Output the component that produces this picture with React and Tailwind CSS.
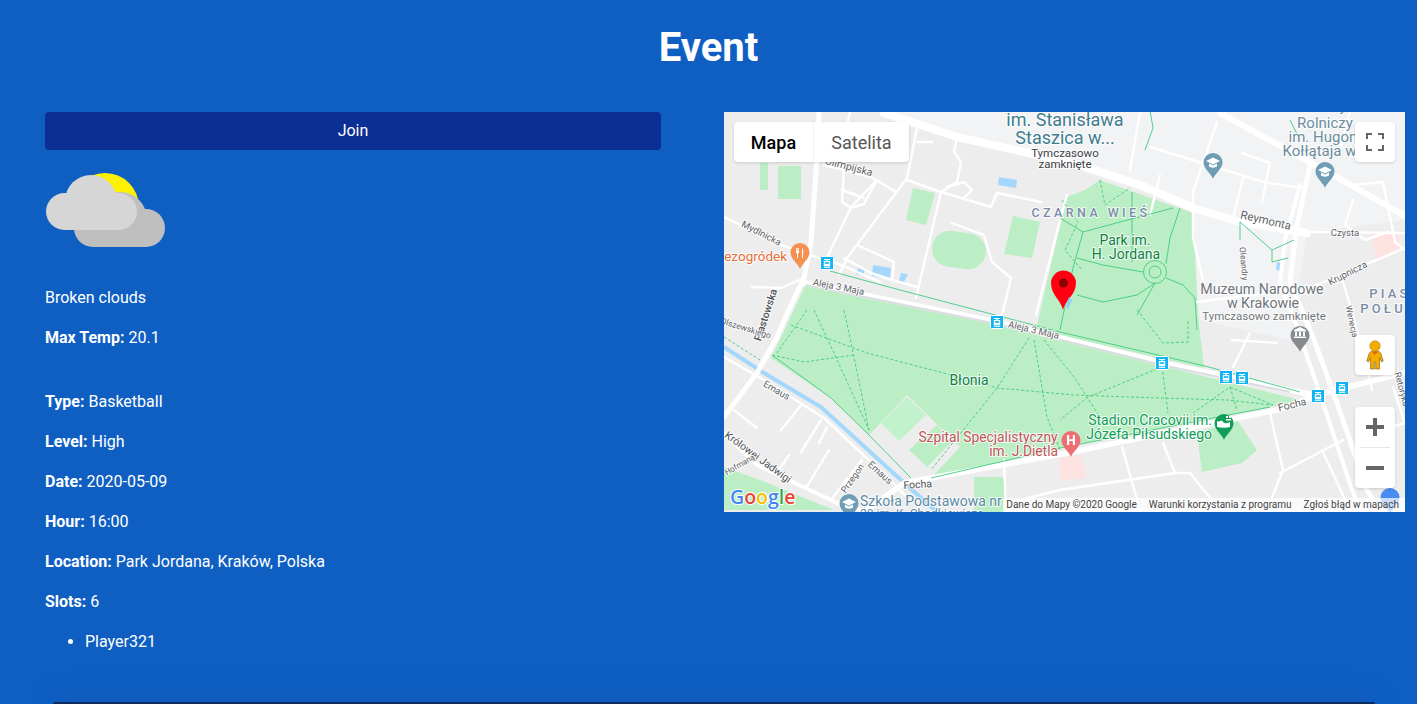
import React from "react";

const MINOR_ROADS = [
  "M917 128 907 178 847 258 839 275",
  "M877 180 851 207 827 258",
  "M824 165 871 177 896 192",
  "M844 168 842 202 851 208 864 204 877 180",
  "M842 190 864 198",
  "M907 180 941 192 991 207 997 193 1041 202",
  "M941 192 916 298",
  "M957 137 954 152 961 162 957 182 941 192",
  "M947 187 964 182 972 190 964 198",
  "M952 223 984 235 992 262 1011 278 1002 315",
  "M857 245 894 262 892 280 917 287",
  "M844 258 871 273 892 280",
  "M1067 195 1058 228 1036 315",
  "M724 217 781 245 811 255 841 265 880 282",
  "M752 287 781 288 804 278",
  "M917 142 932 142",
  "M850 112 846 130 838 142",
  "M1217 122 1193 192 1193 238 1203 280",
  "M1150 147 1267 183 1305 188",
  "M1242 153 1270 163 1262 202",
  "M1243 178 1233 218",
  "M1140 112 1130 170",
  "M1160 175 1150 215",
  "M1353 185 1383 182 1395 242 1405 250",
  "M1312 232 1405 233",
  "M1300 292 1405 248",
  "M1197 302 1293 290",
  "M1343 282 1353 315 1372 390",
  "M1232 340 1277 343",
  "M1250 333 1233 367",
  "M1270 413 1283 470 1267 510",
  "M1122 447 1140 510",
  "M1163 443 1175 473 1060 490",
  "M1175 473 1190 473 1220 510",
  "M1343 440 1280 473",
  "M1322 450 1350 510",
  "M1405 423 1357 437",
  "M1393 387 1405 423",
  "M734 410 757 428",
  "M801 405 781 430",
  "M821 420 801 452",
  "M827 427 819 443",
  "M789 455 777 473",
  "M829 450 806 488",
  "M862 460 831 500",
  "M1060 490 1020 500 1006 512",
  "M1004 460 1006 512",
  "M1340 150 1350 112",
  "M1353 200 1345 225 1365 240 1388 232",
];

const DASHED_PATHS = [
  "M791 325 867 353 951 375 997 388 1074 395 1160 398 1227 400 1273 405",
  "M814 310 834 353 869 430",
  "M844 310 854 357 869 430",
  "M772 355 804 362 854 355",
  "M807 310 777 353",
  "M1029 338 997 388 931 470",
  "M1034 340 1047 417 1060 450",
  "M1044 340 1074 377 1100 417",
  "M1162 367 1088 397 1060 420",
  "M1162 367 1168 413",
  "M1193 413 1230 387 1237 410",
  "M1230 387 1273 405",
  "M724 337 760 360",
  "M1062 200 1078 222 1065 250 1082 270",
  "M1100 180 1105 205 1130 188",
  "M1137 310 1163 343 1188 342 1188 320",
];

const THIN_PATHS = [
  "M830 271 900 290 1060 332 1205 366 1300 392",
  "M772 355 831 398 869 435 911 478",
  "M931 478 1060 448 1270 407",
  "M1060 218 1083 232 1120 222 1173 208",
  "M1077 258 1103 265 1143 272",
  "M1132 192 1132 262",
  "M1180 208 1170 238 1166 264",
  "M1166 278 1183 285 1195 298",
  "M1155 283 1137 295 1103 302 1077 295",
  "M1083 232 1073 268 1060 330",
  "M1155 283 1137 315",
  "M1195 298 1197 330",
  "M1240 222 1272 250 1294 240",
  "M1240 222 1240 240",
  "M1272 250 1272 262 1288 258",
  "M1150 110 1153 128 1145 150",
  "M1290 120 1300 140",
];

const TRAM_STOPS = [
  [827, 263],
  [997, 322],
  [1162, 363],
  [1226, 377],
  [1242, 378],
  [1318, 396],
  [1342, 388],
];

const PIN_PATH = "M0 0C-1.5-5-9.5-10-9.5-16.5A9.5 9.5 0 1 1 9.5-16.5C9.5-10 1.5-5 0 0Z";

function Label({ x, y, size = 12, fill = "#5f6368", rotate, anchor = "middle", weight = 400, spacing, children }) {
  return (
    <text
      x={x}
      y={y}
      fontSize={size}
      fontWeight={weight}
      fill={fill}
      textAnchor={anchor}
      letterSpacing={spacing}
      stroke="#ffffff"
      strokeWidth="2"
      strokeOpacity="0.8"
      paintOrder="stroke"
      transform={rotate ? `rotate(${rotate} ${x} ${y})` : undefined}
    >
      {children}
    </text>
  );
}

function Pin({ x, y, fill, children }) {
  return (
    <g transform={`translate(${x} ${y})`}>
      <path d={PIN_PATH} fill={fill} />
      {children}
    </g>
  );
}

function EduCap() {
  return (
    <g fill="#ffffff">
      <path d="M0-21.5-7-18 0-14.5 7-18Z" />
      <path d="M-4-15.5V-12.5C-2-11 2-11 4-12.5V-15.5L0-13.5Z" />
    </g>
  );
}

function TramStop({ x, y }) {
  return (
    <g transform={`translate(${x} ${y})`}>
      <rect x="-6.5" y="-6.5" width="13" height="13" rx="1" fill="#0fb4f4" stroke="#ffffff" />
      <path d="M-3-4H3V-3H.6V-2H3.2V3H-3.2V-2H-.6V-3H-3Z" fill="#ffffff" />
      <rect x="-3.2" y="3.6" width="6.4" height="1.2" fill="#ffffff" />
      <rect x="-2.2" y="-.8" width="4.4" height="1.6" fill="#0fb4f4" />
    </g>
  );
}

function MapDrawing() {
  return (
    <svg
      viewBox="724 112 681 400"
      className="block h-[400px] w-[681px]"
      style={{ fontFamily: "Roboto, sans-serif" }}
    >
      <rect x="724" y="112" width="681" height="400" fill="#ededed" />
      <path d="M884 112H1405V220L1307 233 1193 208 1024 152Z" fill="#f2f3f5" />
      <path d="M1193 212 1307 233 1290 340 1200 320Z" fill="#f2f3f5" />

      {/* parks and fields */}
      <path d="M807 282 997 325 1300 400 1270 407 1060 448 931 478 960 447 907 395 869 435 831 398 771 358Z" fill="#bbeec4" />
      <path d="M1100 180 1193 213 1198 315 1204 368 1036 330 1045 290 1067 197 1085 190Z" fill="#bbeec4" />
      <path d="M881 423 907 397 926 415 899 441Z" fill="#c2f2cb" />
      <path d="M909 450 937 425 951 443 927 467Z" fill="#bbeec4" />
      <path d="M760 163H768V190H760ZM778 166H801V199H778Z" fill="#bbeec4" />
      <path d="M913 188 935 193 926 225 906 220Z" fill="#bbeec4" />
      <rect x="932" y="232" width="54" height="36" rx="18" fill="#bbeec4" transform="rotate(8 959 250)" />
      <path d="M1013 216 1040 222 1032 258 1004 254Z" fill="#bbeec4" />
      <path d="M1197 433 1237 420 1257 450 1242 463 1202 472Z" fill="#bbeec4" />
      <path d="M724 467 760 480 834 510H724Z" fill="#bbeec4" />
      <path d="M974 477H1003L1010 512H974Z" fill="#bbeec4" />
      <path d="M1060 458 1080 455 1087 478 1060 480ZM1370 233 1398 233 1400 248 1377 260Z" fill="#fde2e0" />

      {/* water */}
      <path d="M999 177 1017 180 1016 188 998 185ZM873 265 891 268 890 279 872 276ZM858 268 865 270 863 275 856 274ZM901 273 908 274 904 282 899 281ZM1277 262 1284 264 1282 271 1276 270Z" fill="#a3d7fb" />
      <path d="M724 347 764 373 821 407 901 480 937 512" fill="none" stroke="#a3d7fb" strokeWidth="4" />

      {/* roads */}
      <g fill="none" stroke="#ffffff" strokeLinejoin="round" strokeLinecap="round">
        <g strokeWidth="2.4">
          {MINOR_ROADS.map((d) => (
            <path key={d} d={d} />
          ))}
        </g>
        <path d="M724 357 764 380 824 418 890 480 905 495" strokeWidth="2.5" />
        <path d="M724 433 757 465 837 503 862 510" strokeWidth="4" />
        <path d="M867 510 904 483 1067 453 1277 410 1323 393 1405 373" strokeWidth="5.5" />
        <path d="M819 112 816 172 811 242 804 278 791 305 777 337 757 373 724 417" strokeWidth="5" />
        <path d="M884 113 957 137 1024 152 1080 165 1140 185 1193 208 1240 222 1307 233" strokeWidth="8" />
        <path d="M1220 113 1310 162 1405 216" strokeWidth="6" />
        <path d="M1310 165 1296 230 1290 282 1313 337 1337 403 1367 490 1380 512" strokeWidth="5" />
        <path d="M1300 185 1285 240 1280 282 1298 330 1322 400 1352 490 1362 512" strokeWidth="4" />
        <path d="M805 283 997 322 1162 363 1318 396" strokeWidth="5.5" />
      </g>
      <path d="M806 285 997 324 1162 365 1290 392" fill="none" stroke="#dadce0" strokeWidth="2" />

      {/* park paths */}
      <g fill="none" stroke="#3fcb82" strokeWidth="0.9">
        {THIN_PATHS.map((d) => (
          <path key={d} d={d} />
        ))}
        <circle cx="1155" cy="272" r="11.5" />
        <circle cx="1155" cy="272" r="6" />
      </g>
      <g fill="none" stroke="#3fcb82" strokeWidth="0.9" strokeDasharray="3 2">
        {DASHED_PATHS.map((d) => (
          <path key={d} d={d} />
        ))}
      </g>

      {/* map labels */}
      <Label x={1065} y={126} size={18} fill="#3f7d8f">im. Stanisława</Label>
      <Label x={1065} y={144} size={18} fill="#3f7d8f">Staszica w...</Label>
      <Label x={1065} y={157} size={11.5} fill="#3c4043">Tymczasowo</Label>
      <Label x={1065} y={168} size={11.5} fill="#3c4043">zamknięte</Label>
      <Label x={1325} y={111} size={15} fill="#6b8c9c">Uniwersytet</Label>
      <Label x={1325} y={128} size={15} fill="#6b8c9c">Rolniczy</Label>
      <Label x={1327} y={142} size={15} fill="#6b8c9c">im. Hugona</Label>
      <Label x={1325} y={156} size={15} fill="#6b8c9c">Kołłątaja w...</Label>
      <Label x={1091} y={217} size={12.5} weight={500} fill="#7b8ba8" spacing={3.4}>CZARNA WIEŚ</Label>
      <Label x={1125} y={245} size={14} fill="#0b8043">Park im.</Label>
      <Label x={1126} y={259} size={14} fill="#0b8043">H. Jordana</Label>
      <Label x={1265} y={224} size={11.5} rotate={13}>Reymonta</Label>
      <Label x={1345} y={236} size={9.5}>Czysta</Label>
      <Label x={1349} y={276} size={9.5} rotate={-27}>Krupnicza</Label>
      <Label x={1241} y={264} size={8.5} rotate={85}>Oleandry</Label>
      <Label x={1262} y={294} size={14.2} fill="#70757a">Muzeum Narodowe</Label>
      <Label x={1263} y={308} size={14.2} fill="#70757a">w Krakowie</Label>
      <Label x={1264} y={320} size={11.5} fill="#70757a">Tymczasowo zamknięte</Label>
      <Label x={1390} y={298} size={13} weight={500} fill="#7b8ba8" spacing={3.2}>PIAS</Label>
      <Label x={1383} y={313} size={13} weight={500} fill="#7b8ba8" spacing={3.2}>POŁU</Label>
      <Label x={1349} y={322} size={8.5} rotate={78}>Wenecja</Label>
      <Label x={1399} y={390} size={9} rotate={75}>Retoryka</Label>
      <Label x={848} y={170} size={10.5} rotate={15}>Olimpijska</Label>
      <Label x={760} y={236} size={9.5} rotate={27}>Mydlnicka</Label>
      <Label x={787} y={261} size={13.5} anchor="end" fill="#e66f3a">ezogródek</Label>
      <Label x={838} y={290} size={9.5} rotate={11}>Aleja 3 Maja</Label>
      <Label x={1033} y={333} size={9.5} rotate={13}>Aleja 3 Maja</Label>
      <Label x={769} y={316} size={10.5} weight={500} rotate={-72} fill="#4d5156">Piastowska</Label>
      <Label x={745} y={331} size={8.5} rotate={17}>Olszewskiego</Label>
      <Label x={775} y={393} size={9.5} rotate={30}>Emaus</Label>
      <Label x={878} y={475} size={9.5} rotate={42}>Emaus</Label>
      <Label x={855} y={480} size={9} rotate={-55}>Przegon</Label>
      <Label x={756} y={460} size={10.5} rotate={36} fill="#4d5156">Królowej Jadwigi</Label>
      <Label x={741} y={467} size={8} rotate={-30}>Hofmana</Label>
      <Label x={969} y={385} size={14} fill="#0b8043">Błonia</Label>
      <Label x={988} y={442} size={13.8} fill="#c5535b">Szpital Specjalistyczny</Label>
      <Label x={1058} y={456} size={13.8} anchor="end" fill="#c5535b">im. J.Dietla</Label>
      <Label x={918} y={488} size={10.5} rotate={-4} fill="#4d5156">Focha</Label>
      <Label x={1293} y={408} size={10.5} rotate={-14} fill="#5f6368">Focha</Label>
      <Label x={1212} y={425} size={14} anchor="end" fill="#0f9d58">Stadion Cracovii im.</Label>
      <Label x={1212} y={439} size={14} anchor="end" fill="#0f9d58">Józefa Piłsudskiego</Label>
      <Label x={860} y={506} size={14} anchor="start" fill="#5b8ba6">Szkoła Podstawowa nr</Label>
      <Label x={860} y={518} size={12} anchor="start" fill="#5b8ba6">20 im. K. Chodkiewicza</Label>

      {/* poi markers */}
      <Pin x={1213} y={179} fill="#6f9db3"><EduCap /></Pin>
      <Pin x={1325} y={188} fill="#6f9db3"><EduCap /></Pin>
      <Pin x={849} y={520} fill="#6f9db3"><EduCap /></Pin>
      <Pin x={800} y={269} fill="#f59150">
        <path d="M-4-21V-16H-3V-11H-2V-16H-1V-21H-1.7V-18H-2.2V-21H-2.8V-18H-3.3V-21ZM2-21C3.5-20 3.5-16 3-15V-11H2Z" fill="#ffffff" />
      </Pin>
      <Pin x={1300} y={352} fill="#868b90">
        <path d="M-6-14V-15.5H6V-14ZM-6-22 0-25 6-22V-20.5H-6ZM-5-20H-3V-16H-5ZM-1-20H1V-16H-1ZM3-20H5V-16H3Z" fill="#ffffff" />
      </Pin>
      <Pin x={1071} y={457} fill="#ee6e73">
        <path d="M-4-22H-1.8V-17.8H1.8V-22H4V-12H1.8V-16H-1.8V-12H-4Z" fill="#ffffff" />
      </Pin>
      <Pin x={1224} y={440} fill="#0f9d58">
        <path d="M-7-19C-5-17-3-21-1-18 1-16 4-17 6-18V-13C3-12-3-12-7-13ZM2-24H4V-22H2ZM5-24H7V-22H5ZM2-21H7V-19.5H2Z" fill="#ffffff" />
      </Pin>
      <Pin x={1390} y={514} fill="#4a8df0" />
      <path d="M1063 310C1061 300 1051 295 1051 283A12.5 12.5 0 1 1 1076 283C1076 295 1065 300 1063 310Z" fill="#ff0013" />
      <circle cx="1063.5" cy="283" r="4.5" fill="#8a0000" />
      <path d="M1069 297 1072 300 1068 310 1066 306Z" fill="#8fd0f5" />

      {TRAM_STOPS.map(([x, y]) => (
        <TramStop key={x} x={x} y={y} />
      ))}

      {/* this logo is plain text, just coloured per letter */}
      <text
        x="730"
        y="504"
        fontSize="19.5"
        fontWeight="600"
        stroke="#ffffff"
        strokeWidth="2"
        paintOrder="stroke"
        style={{ fontFamily: "'Open Sans', sans-serif" }}
      >
        <tspan fill="#4285f4">G</tspan>
        <tspan fill="#ea4335">o</tspan>
        <tspan fill="#fbbc05">o</tspan>
        <tspan fill="#4285f4">g</tspan>
        <tspan fill="#34a853">l</tspan>
        <tspan fill="#ea4335">e</tspan>
      </text>
    </svg>
  );
}

function MapControls() {
  return (
    <>
      <div className="absolute left-[10px] top-[10px] flex h-10 w-[175px] rounded-sm bg-white text-[18px] shadow-[0_1px_3px_rgba(0,0,0,0.15)]">
        <button className="w-20 border-r border-gray-100 font-medium text-black">Mapa</button>
        <button className="flex-1 text-[#565656]">Satelita</button>
      </div>

      <button className="absolute right-[10px] top-[10px] flex h-10 w-10 items-center justify-center rounded-sm bg-white shadow-[0_1px_3px_rgba(0,0,0,0.15)]">
        <svg width="18" height="18" viewBox="0 0 18 18" fill="#666666">
          <path d="M0 0H6V2H2V6H0ZM12 0H18V6H16V2H12ZM0 12H2V16H6V18H0ZM16 12H18V18H12V16H16Z" />
        </svg>
      </button>

      <div className="absolute right-[10px] top-[223px] flex h-10 w-10 items-center justify-center rounded-sm bg-white shadow-[0_1px_3px_rgba(0,0,0,0.15)]">
        <svg width="18" height="30" viewBox="0 0 18 30">
          <path d="M9 11C5 11 3.5 12 3 14L.8 21 2.5 22 4.5 17.5V29H8.3V22H9.7V29H13.5V17.5L15.5 22 17.2 21 15 14C14.500 12 13 11 9 11Z" fill="#f5ab00" stroke="#8a6d1f" strokeWidth="0.7" />
          <path d="M5.500 11.500 9 15 12.500 11.500Z" fill="#e0661f" />
          <circle cx="9" cy="6" r="5.200" fill="#f5ab00" stroke="#a5821f" strokeWidth="0.6" />
        </svg>
      </div>

      <div className="absolute right-[10px] top-[295px] flex h-[81px] w-10 flex-col items-center rounded-sm bg-white shadow-[0_1px_3px_rgba(0,0,0,0.15)]">
        <button className="flex h-10 w-full items-center justify-center">
          <svg width="18" height="18" viewBox="0 0 18 18" fill="#666666">
            <path d="M7 0H11V7H18V11H11V18H7V11H0V7H7Z" />
          </svg>
        </button>
        <div className="h-px w-[30px] bg-gray-200" />
        <button className="flex h-10 w-full items-center justify-center">
          <svg width="18" height="18" viewBox="0 0 18 18" fill="#666666">
            <path d="M0 7H18V11H0Z" />
          </svg>
        </button>
      </div>

      <div className="absolute bottom-0 right-0 flex h-[14px] items-center gap-3 bg-white/70 pl-[3px] pr-[6px] text-[10px] leading-none text-[#444444]">
        <span>Dane do Mapy ©2020 Google</span>
        <span>Warunki korzystania z programu</span>
        <span>Zgłoś błąd w mapach</span>
      </div>
    </>
  );
}

function WeatherIcon() {
  return (
    <svg width="120" height="76" viewBox="45 172 120 76" className="block">
      <circle cx="105" cy="207" r="34" fill="#fff200" />
      <g fill="#bfbfbf">
        <rect x="74" y="209" width="91" height="38" rx="19" />
        <circle cx="120" cy="219" r="27" />
      </g>
      <g fill="#d6d6d6">
        <rect x="46" y="193" width="91" height="37" rx="18.500" />
        <circle cx="91" cy="201" r="26" />
      </g>
    </svg>
  );
}

function Detail({ label, children }) {
  return (
    <p className="mb-4 leading-6">
      {label && <strong className="font-bold">{label}: </strong>}
      {children}
    </p>
  );
}

export default function App() {
  return (
    <div
      className="flex h-[704px] flex-col overflow-hidden bg-[#0f5fc3] text-white"
      style={{ fontFamily: "Roboto, sans-serif" }}
    >
      <h1 className="h-[112px] pt-[25px] text-center text-[40px] font-bold leading-[46px]">Event</h1>

      <div className="flex flex-1 pl-[45px]">
        <div className="w-[616px]">
          <button className="h-[38px] w-full rounded bg-[#0b2f94] text-white">Join</button>
          <div className="mb-[38px] mt-[22px]">
            <WeatherIcon />
          </div>
          <Detail>Broken clouds</Detail>
          <Detail label="Max Temp">20.1</Detail>
          <div className="h-6" />
          <Detail label="Type">Basketball</Detail>
          <Detail label="Level">High</Detail>
          <Detail label="Date">2020-05-09</Detail>
          <Detail label="Hour">16:00</Detail>
          <Detail label="Location">Park Jordana, Kraków, Polska</Detail>
          <Detail label="Slots">6</Detail>
          <ul className="list-disc pl-10 leading-6">
            <li>Player321</li>
          </ul>
        </div>

        <div className="relative ml-[63px] h-[400px] w-[681px] overflow-hidden">
          <MapDrawing />
          <MapControls />
        </div>
      </div>

      <div className="ml-[53px] h-[2px] w-[1322px] shrink-0 rounded-t bg-[#0d2b5e] shadow-[0_-4px_24px_rgba(6,40,100,0.55)]" />
    </div>
  );
}
